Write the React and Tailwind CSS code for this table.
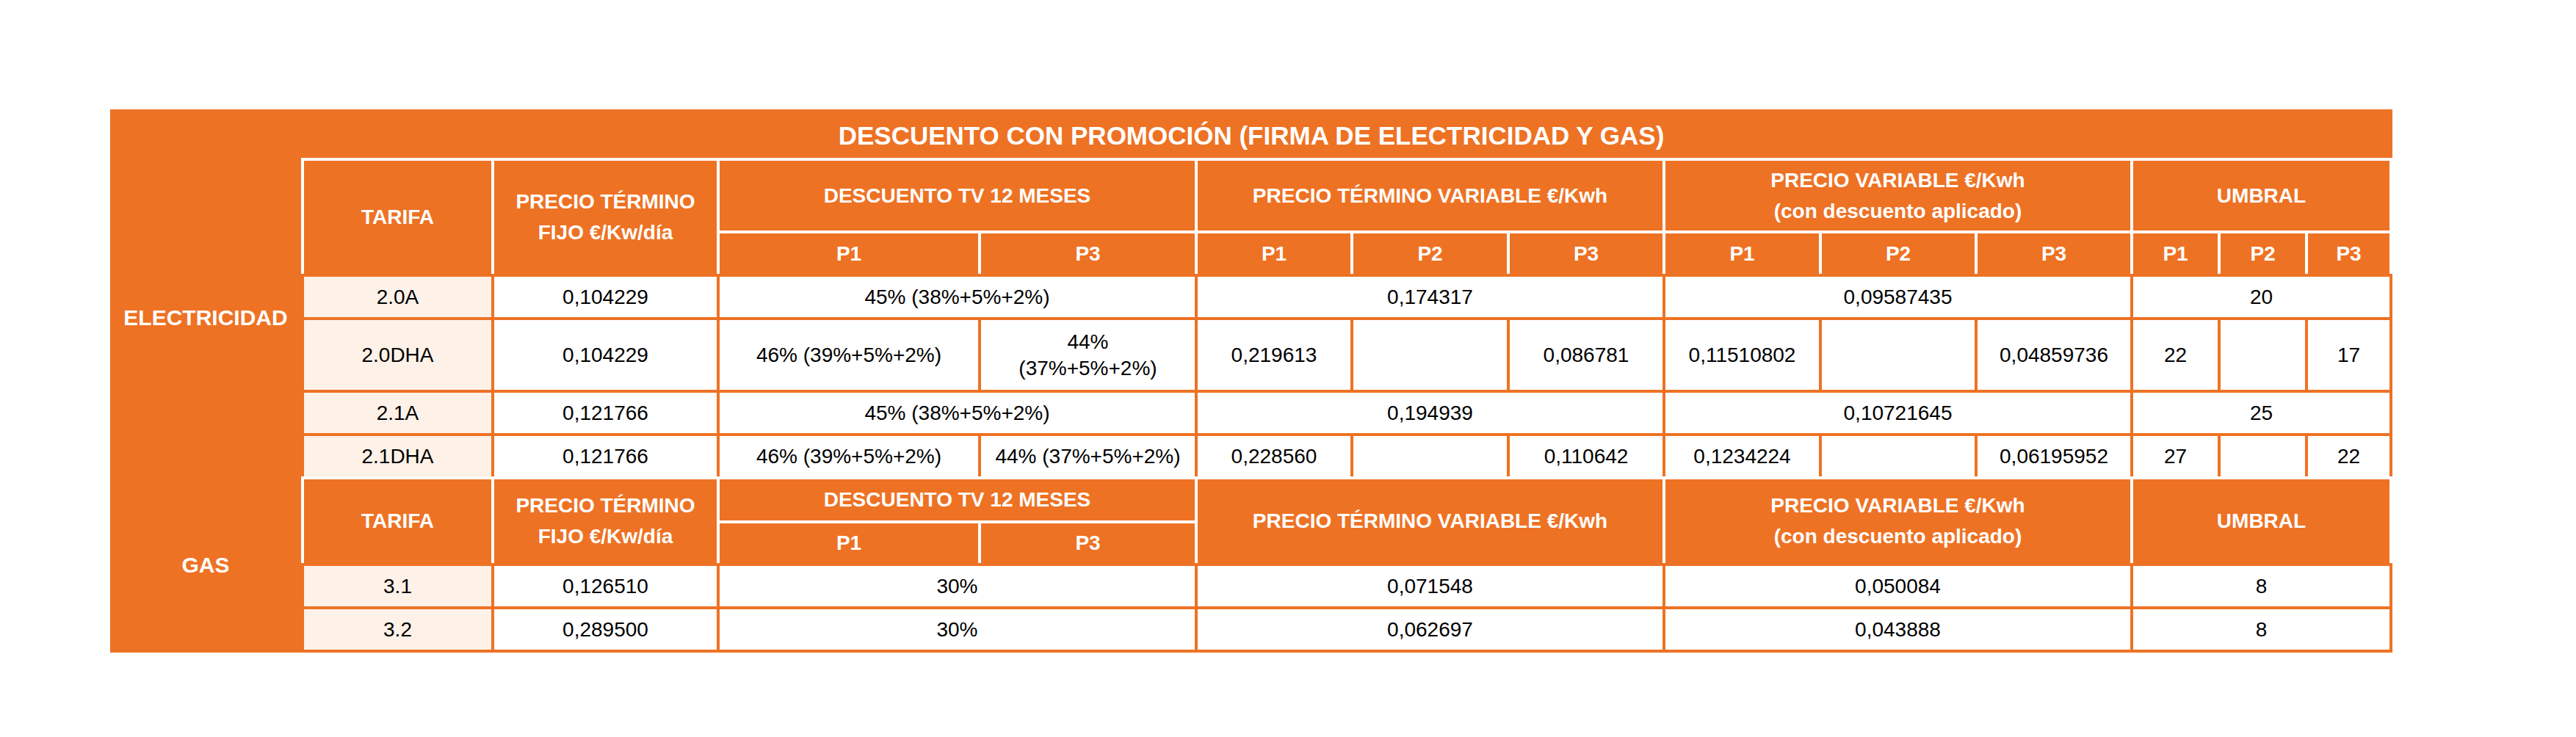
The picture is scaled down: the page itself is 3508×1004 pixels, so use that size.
import React from 'react';

// columns: tarifa | fijo | desc P1 | desc P3 | var P1-P3 | pv P1-P3 | umbral P1-P3
const COLS = 'grid grid-cols-[255px_303px_352px_291px_208px_209px_208px_209px_208px_208px_115px_115px_111px] gap-[4px] px-[4px]';

const elecRows = [
  { tarifa: '2.0A', fijo: '0,104229', desc: '45% (38%+5%+2%)', variable: '0,174317', pv: '0,09587435', umbral: '20' },
  {
    tarifa: '2.0DHA', fijo: '0,104229', tall: true,
    desc: ['46% (39%+5%+2%)', <>44%<br />(37%+5%+2%)</>],
    variable: ['0,219613', '', '0,086781'],
    pv: ['0,11510802', '', '0,04859736'],
    umbral: ['22', '', '17'],
  },
  { tarifa: '2.1A', fijo: '0,121766', desc: '45% (38%+5%+2%)', variable: '0,194939', pv: '0,10721645', umbral: '25' },
  {
    tarifa: '2.1DHA', fijo: '0,121766',
    desc: ['46% (39%+5%+2%)', '44% (37%+5%+2%)'],
    variable: ['0,228560', '', '0,110642'],
    pv: ['0,1234224', '', '0,06195952'],
    umbral: ['27', '', '22'],
  },
];

const gasRows = [
  { tarifa: '3.1', fijo: '0,126510', desc: '30%', variable: '0,071548', pv: '0,050084', umbral: '8' },
  { tarifa: '3.2', fijo: '0,289500', desc: '30%', variable: '0,062697', pv: '0,043888', umbral: '8' },
];

function Head({ className = '', children }) {
  return (
    <div className={`bg-[#ee7224] text-white font-bold text-[28px] leading-[42px] flex items-center justify-center text-center ${className}`}>
      {children}
    </div>
  );
}

function Td({ className = '', cream, children }) {
  return (
    <div className={`${cream ? 'bg-[#fdf1e8]' : 'bg-white'} text-black text-[28px] leading-[36px] flex items-center justify-center text-center ${className}`}>
      {children}
    </div>
  );
}

function Group({ value, span }) {
  if (Array.isArray(value)) {
    return value.map((v, i) => <Td key={i}>{v}</Td>);
  }
  return <Td className={span === 2 ? 'col-span-2' : 'col-span-3'}>{value}</Td>;
}

function BodyRows({ rows }) {
  return rows.map((r, i) => (
    <React.Fragment key={i}>
      <Td cream>{r.tarifa}</Td>
      <Td>{r.fijo}</Td>
      <Group value={r.desc} span={2} />
      <Group value={r.variable} />
      <Group value={r.pv} />
      <Group value={r.umbral} />
    </React.Fragment>
  ));
}

const fijo = <>PRECIO TÉRMINO<br />FIJO €/Kw/día</>;
const pvLabel = <>PRECIO VARIABLE €/Kwh<br />(con descuento aplicado)</>;

export default function App() {
  return (
    <div className="w-[3508px] h-[1004px] bg-white pt-[149px] pl-[150px] font-['Liberation_Sans',Arial,sans-serif]">
      <div className="w-[3108px] bg-[#ee7224]">
        <div className="h-[66px] pt-[6px] flex items-center justify-center text-white font-bold text-[35px]">
          DESCUENTO CON PROMOCIÓN (FIRMA DE ELECTRICIDAD Y GAS)
        </div>

        {/* Electricidad */}
        <div className="flex">
          <div className="w-[260px] flex items-center justify-center text-white font-bold text-[30px]">ELECTRICIDAD</div>
          <div>
            <div className={`${COLS} bg-white pt-[4px] grid-rows-[95px_55px]`}>
              <Head className="row-span-2">TARIFA</Head>
              <Head className="row-span-2">{fijo}</Head>
              <Head className="col-span-2">DESCUENTO TV 12 MESES</Head>
              <Head className="col-span-3">PRECIO TÉRMINO VARIABLE €/Kwh</Head>
              <Head className="col-span-3">{pvLabel}</Head>
              <Head className="col-span-3">UMBRAL</Head>
              {['P1', 'P3', 'P1', 'P2', 'P3', 'P1', 'P2', 'P3', 'P1', 'P2', 'P3'].map((p, i) => (
                <Head key={i}>{p}</Head>
              ))}
            </div>
            <div className={`${COLS} bg-[#ee7224] pt-[4px] grid-rows-[55px_95px_55px_55px]`}>
              <BodyRows rows={elecRows} />
            </div>
          </div>
        </div>

        {/* Gas */}
        <div className="flex">
          <div className="w-[260px] flex items-center justify-center text-white font-bold text-[30px]">GAS</div>
          <div>
            <div className={`${COLS} bg-white pt-[4px] grid-rows-[56px_54px]`}>
              <Head className="row-span-2">TARIFA</Head>
              <Head className="row-span-2">{fijo}</Head>
              <Head className="col-span-2">DESCUENTO TV 12 MESES</Head>
              <Head className="col-span-3 row-span-2">PRECIO TÉRMINO VARIABLE €/Kwh</Head>
              <Head className="col-span-3 row-span-2">{pvLabel}</Head>
              <Head className="col-span-3 row-span-2">UMBRAL</Head>
              <Head>P1</Head>
              <Head>P3</Head>
            </div>
            <div className={`${COLS} bg-[#ee7224] py-[4px] grid-rows-[55px_55px]`}>
              <BodyRows rows={gasRows} />
            </div>
          </div>
        </div>
      </div>
    </div>
  );
}
